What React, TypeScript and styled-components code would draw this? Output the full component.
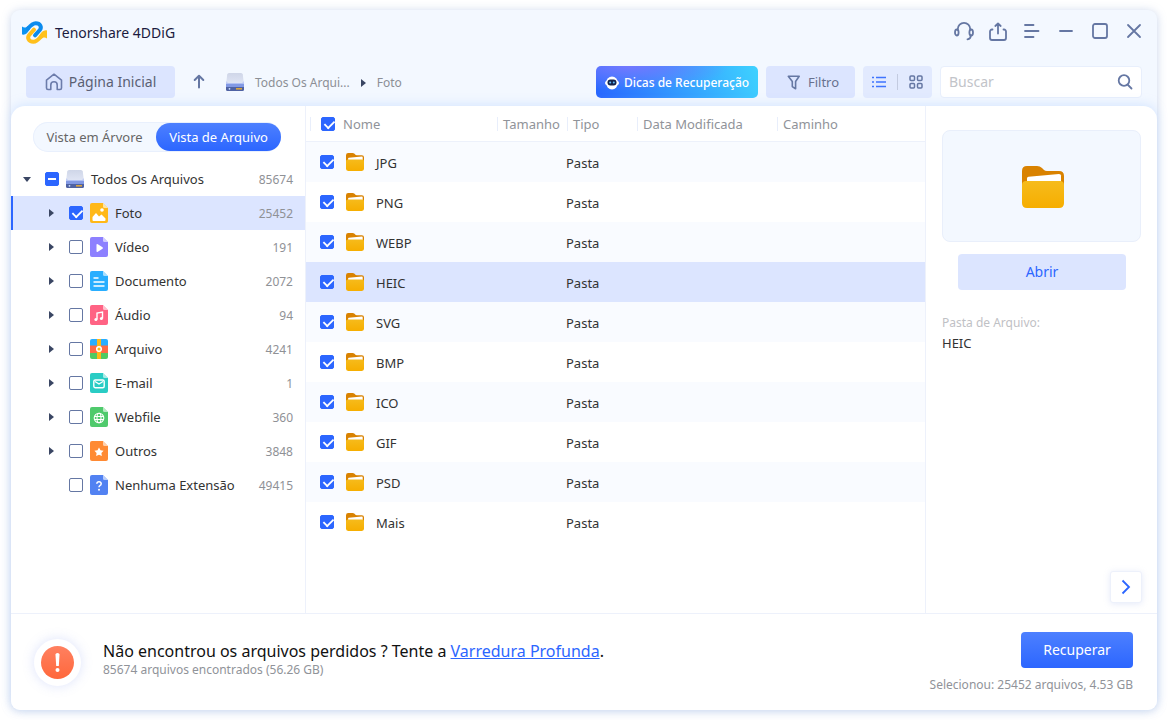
import React from "react";
import styled, { createGlobalStyle, css } from "styled-components";

const Global = createGlobalStyle`
  * { box-sizing: border-box; }
  body { margin: 0; background: #fff; font-family: "Noto Sans", "Open Sans", sans-serif; font-size: 13px; line-height: 20px; color: #333; }
  button, input { font: inherit; color: inherit; }
  button { border: 0; padding: 0; background: none; cursor: pointer; }
  svg { display: block; flex: none; }
`;

const Page = styled.div`
  min-height: 100vh;
  padding: 10px 11px;
  display: flex;
`;

const Frame = styled.div`
  flex: 1;
  min-width: 0;
  display: flex;
  flex-direction: column;
  background: #f3f8ff;
  border-radius: 9px;
  box-shadow: 0 1px 10px rgba(120, 150, 205, 0.4);
`;

const TitleBar = styled.header`
  display: flex;
  align-items: center;
  height: 42px;
  padding: 2px 11px 0 11px;
  gap: 8px;
`;

const AppName = styled.h1`
  margin: 2px 0 0;
  flex: 1;
  font-size: 14px;
  line-height: 20px;
  font-weight: 400;
  color: #1b1b40;
`;

const WindowActions = styled.div`
  display: flex;
  align-items: center;
  gap: 10px;
  margin-bottom: 3px;
`;

const WindowButton = styled.button`
  width: 24px;
  height: 24px;
  display: grid;
  place-items: center;
  color: #6577a3;
`;

const Toolbar = styled.div`
  display: flex;
  align-items: center;
  gap: 8px;
  height: 60px;
  margin-bottom: -6px;
  padding: 0 15px;
`;

const HomeButton = styled.button`
  width: 149px;
  height: 32px;
  display: flex;
  align-items: center;
  justify-content: center;
  gap: 6px;
  border-radius: 4px;
  background: #dce5ff;
  color: #5a5f73;
  font-size: 14px;
`;

const UpButton = styled.button`
  width: 32px;
  height: 32px;
  display: grid;
  place-items: center;
`;

const Breadcrumb = styled.nav`
  flex: 1;
  display: flex;
  align-items: center;
  gap: 11px;
  font-size: 12px;
  padding: 1px 0 0 3px;
  & > svg:first-child { margin-bottom: 2px; }
`;

const Crumb = styled.a`
  color: #8c8f96;
  text-decoration: none;
  white-space: nowrap;
`;

const TipsButton = styled.button`
  width: 162px;
  height: 32px;
  display: flex;
  align-items: center;
  justify-content: center;
  gap: 5px;
  padding-top: 1px;
  border-radius: 5px;
  background: radial-gradient(ellipse at 20% 0, #7378ff 0, transparent 55%), linear-gradient(70deg, #2966ff, #3ed2ff);
  color: #fff;
  font-size: 12px;
  font-weight: 500;
  white-space: nowrap;
`;

const FilterButton = styled.button`
  width: 89px;
  height: 32px;
  display: flex;
  align-items: center;
  justify-content: center;
  gap: 7px;
  padding-left: 5px;
  border-radius: 4px;
  background: #dce5ff;
  color: #67718f;
`;

const ViewSwitch = styled.div`
  width: 69px;
  height: 32px;
  display: flex;
  align-items: center;
  border-radius: 4px;
  background: #e2eafe;
`;

const ViewButton = styled.button`
  flex: 1;
  height: 16px;
  display: grid;
  place-items: center;
  padding-right: 2px;
  & + & { border-left: 1px solid #c3cbe0; padding: 0 0 0 2px; }
`;

const SearchBox = styled.label`
  width: 202px;
  height: 32px;
  display: flex;
  align-items: center;
  padding: 0 8px;
  border: 1px solid #e8effc;
  border-radius: 4px;
  background: #fff;
`;

const SearchInput = styled.input`
  flex: 1;
  min-width: 0;
  border: 0;
  padding: 0;
  outline: 0;
  background: none;
  font-size: 14px;
  &::placeholder { color: #c2c4c9; opacity: 1; }
`;

const Body = styled.div`
  flex: 1;
  display: flex;
  flex-direction: column;
  background: #fff;
  border-radius: 14px 14px 9px 9px;
  box-shadow: 0 -2px 10px rgba(190, 215, 255, 0.5);
`;

const Columns = styled.main`
  flex: 1;
  display: flex;
`;

const Sidebar = styled.aside`
  width: 295px;
  flex: none;
  border-right: 1px solid #edf1fb;
`;

const Tabs = styled.div`
  width: 248px;
  height: 30px;
  margin: 16px 0 10px 22px;
  display: flex;
  border-radius: 15px;
  background: #f3f8ff;
  box-shadow: inset 0 0 0 1px #e9f0fd;
`;

const Tab = styled.button<{ $on?: boolean }>`
  flex: ${(p) => (p.$on ? "125" : "123")} 0 0;
  height: 28px;
  margin: 1px 0;
  border-radius: 14px;
  white-space: nowrap;
  color: #666;
  ${(p) => p.$on && css`
    color: #fff;
    background: linear-gradient(#4d80ff, #2c66ff);
  `}
`;

const Tree = styled.ul`
  list-style: none;
  margin: 0;
  padding: 0;
`;

const TreeRow = styled.li<{ $on?: boolean; $root?: boolean }>`
  height: 34px;
  display: flex;
  align-items: center;
  padding: 0 12px 0 ${(p) => (p.$root ? 11 : 35)}px;
  ${(p) => p.$on && css`
    background: #dce5ff;
    box-shadow: inset 2px 0 0 #2c66ff;
  `}
`;

const Caret = styled.span<{ $open?: boolean; $hidden?: boolean }>`
  width: 10px;
  height: 10px;
  margin-right: 13px;
  flex: none;
  display: grid;
  place-items: center;
  visibility: ${(p) => (p.$hidden ? "hidden" : "visible")};
  &::before {
    content: "";
    border: solid transparent;
    ${(p) => p.$open
      ? css`border-width: 5px 4px 0; border-top-color: #3a4663;`
      : css`border-width: 4px 0 4px 5px; border-left-color: #3a4663;`}
  }
`;

const Check = styled.input.attrs({ type: "checkbox" })<{ $partial?: boolean }>`
  appearance: none;
  flex: none;
  display: block;
  width: 14px;
  height: 14px;
  margin: 0;
  border: 1px solid #6577a3;
  border-radius: 2px;
  background: #fff;
  &:checked {
    border-color: #2c66ff;
    background: #2c66ff;
  }
  &:checked::before {
    content: "";
    display: block;
    ${(p) => p.$partial
      ? css`width: 8px; height: 2px; margin: 5px 2px; background: #fff;`
      : css`width: 9px; height: 5px; margin: 2px; border: solid #fff; border-width: 0 0 2px 2px; transform: rotate(-45deg) scale(0.9);`}
  }
`;

const TreeLabel = styled.label`
  flex: 1;
  display: flex;
  align-items: center;
  gap: 7px;
  margin-left: 7px;
  white-space: nowrap;
`;

const Count = styled.span`
  padding-top: 2px;
  font-size: 12px;
  color: #8f9196;
`;

const ListArea = styled.section`
  flex: 1;
  min-width: 0;
`;

const Table = styled.table`
  width: 100%;
  table-layout: fixed;
  border-collapse: separate;
  border-spacing: 0;
`;

const HeadCell = styled.th<{ $w?: number }>`
  width: ${(p) => (p.$w ? p.$w + "px" : "auto")};
  height: 36px;
  padding: 0 0 0 1px;
  border-bottom: 1px solid #edf1fb;
  text-align: left;
  font-weight: 400;
  color: #909399;
  white-space: nowrap;
`;

const HeadInner = styled.div<{ $first?: boolean }>`
  height: 14px;
  display: flex;
  align-items: center;
  gap: 8px;
  border-left: 1px solid #e8eefb;
  margin-left: ${(p) => (p.$first ? 3 : 0)}px;
  padding-left: ${(p) => (p.$first ? 10 : 5)}px;
`;

const Row = styled.tr<{ $on?: boolean }>`
  background: #fff;
  &:nth-child(odd) { background: #f9fbff; }
  ${(p) => p.$on && css`&& { background: #dce5ff; }`}
`;

const Cell = styled.td`
  height: 40px;
  padding: 2px 0 0;
`;

const FileName = styled.label`
  display: flex;
  align-items: center;
  gap: 12px;
  padding-left: 14px;
  & > input, & > svg { margin-bottom: 2px; }
`;

const Detail = styled.aside`
  width: 232px;
  flex: none;
  display: flex;
  flex-direction: column;
  border-left: 1px solid #edf1fb;
  padding: 24px 15px 10px 16px;
`;

const Preview = styled.div`
  height: 112px;
  margin-right: 1px;
  display: grid;
  place-items: center;
  padding: 1px 0 0 2px;
  border: 1px solid #e9effb;
  border-radius: 8px;
  background: #f3f8ff;
`;

const OpenButton = styled.button`
  height: 36px;
  margin: 12px 16px 23px;
  border-radius: 4px;
  background: #dce5ff;
  color: #2c66ff;
  font-size: 14px;
`;

const FieldName = styled.span`
  font-size: 12px;
  color: #bfc1c5;
`;

const NextButton = styled.button`
  width: 32px;
  height: 32px;
  margin-top: auto;
  align-self: flex-end;
  display: grid;
  place-items: center;
  border: 1px solid #edf1fb;
  border-radius: 3px;
  background: #fff;
  box-shadow: 0 1px 6px rgba(150, 170, 230, 0.25);
`;

const Footer = styled.footer`
  min-height: 97px;
  display: flex;
  align-items: center;
  gap: 22px;
  padding: 0 24px 0 23px;
  border-top: 1px solid #edf1fb;
`;

const AlertBadge = styled.div`
  width: 47px;
  height: 47px;
  display: grid;
  place-items: center;
  border-radius: 50%;
  background: #fff;
  box-shadow: 0 0 12px rgba(120, 145, 240, 0.25);
`;

const Message = styled.div`
  flex: 1;
  padding-bottom: 7px;
`;

const Question = styled.p`
  margin: 0;
  font-size: 16px;
  line-height: 22px;
  color: #111;
  a { color: #2c66ff; }
`;

const Note = styled.p`
  margin: 0;
  font-size: 12px;
  line-height: 16px;
  color: #909399;
`;

const Finish = styled.div`
  display: flex;
  flex-direction: column;
  align-items: flex-end;
  gap: 9px;
  padding-top: 1px;
`;

const RecoverButton = styled.button`
  width: 112px;
  height: 36px;
  border-radius: 4px;
  background: linear-gradient(#4d80ff, #2c66ff);
  color: #fff;
  font-size: 14px;
`;

const line = { fill: "none", stroke: "currentColor", strokeWidth: 2, strokeLinecap: "round", strokeLinejoin: "round" } as const;

const Logo = () => (
  <svg width="25" height="23" viewBox="0 0 25 23" fill="none" strokeWidth="4" strokeLinecap="round">
    <path d="M0 5.500C2 7 4 7 5.500 5L8 8C5.500 12 3.500 14.300 0 13.500z" fill="#0b93f2" />
    <path d="M25 17.500C23 16 21 16 19.500 18L17 15C19.500 11 21.500 8.700 25 9.500z" fill="#ffc21c" />
    <path d="M6 7.500C9 3.800 11.300 2.200 13.700 2.200C18.500 2.200 20 6.300 17.800 9L13 14.300" stroke="#0b8bee" />
    <path d="M19 15.500C16 19.200 13.700 20.800 11.300 20.800C6.500 20.800 5 16.700 7.200 14L12 8.700" stroke="#ffc01c" />
  </svg>
);

const HeadsetIcon = () => (
  <svg width="20" height="20" viewBox="0 0 20 20" {...line} strokeWidth="1.800">
    <path d="M3.800 8.500V8a6.200 6.200 0 0 1 12.400 0v.5M16.800 14.500c0 2-1.300 3.500-3.300 3.800" />
    <ellipse cx="2.800" cy="11.500" rx="1.800" ry="3" /><ellipse cx="17.200" cy="11.500" rx="1.800" ry="3" />
  </svg>
);
const ShareIcon = () => (
  <svg width="20" height="20" viewBox="0 0 20 20" {...line} strokeWidth="1.800">
    <path d="M4.500 8.500H4a2 2 0 0 0-2 2V17a2 2 0 0 0 2 2h12a2 2 0 0 0 2-2v-6.500a2 2 0 0 0-2-2h-.5M10 12.500V3M7.300 5L10 2.500 12.700 5" />
  </svg>
);
const MenuIcon = () => (
  <svg width="20" height="20" viewBox="0 0 20 20" {...line} strokeWidth="1.800"><path d="M3 4h8.500M3 10h13.500M3 16h8.500" /></svg>
);
const MinimizeIcon = () => (
  <svg width="20" height="20" viewBox="0 0 20 20" {...line} strokeWidth="1.800"><path d="M4 10h12" /></svg>
);
const MaximizeIcon = () => (
  <svg width="20" height="20" viewBox="0 0 20 20" {...line} strokeWidth="1.800"><rect x="3" y="3" width="14" height="14" rx="2" /></svg>
);
const CloseIcon = () => (
  <svg width="20" height="20" viewBox="0 0 20 20" {...line} strokeWidth="1.800"><path d="M4 4l12 12M16 4L4 16" /></svg>
);
const HomeIcon = () => (
  <svg width="18" height="18" viewBox="0 0 18 18" {...line} stroke="#6c7cab" strokeWidth="1.600">
    <path d="M1.500 7.200L9 1.200l7.500 6V15a1.500 1.500 0 0 1-1.500 1.500h-2.800V12a3.200 3.200 0 0 0-6.400 0v4.500H3A1.500 1.500 0 0 1 1.500 15z" />
  </svg>
);
const UpIcon = () => (
  <svg width="14" height="16" viewBox="0 0 14 16" {...line} stroke="#6577a3"><path d="M7 13.500V2M2.700 6L7 1.700 11.300 6" /></svg>
);
const DriveIcon = () => (
  <svg width="18" height="18" viewBox="0 0 18 18">
    <defs>
      <linearGradient id="drive" x1="0" y1="0" x2="0" y2="1"><stop stopColor="#cfd6e8" /><stop offset="1" stopColor="#e2e7f6" /></linearGradient>
    </defs>
    <path d="M3 0h12q1.500 0 1.800 1.500L18 12H0L1.200 1.500Q1.500 0 3 0z" fill="url(#drive)" />
    <path d="M0 10.500q0 2 2 2h14q2 0 2-2l-.8-2.500-.7 2H1.500l-.7-2z" fill="#b3c2f3" />
    <rect y="11" width="18" height="3.500" fill="#8299e4" />
    <path d="M0 14h18v2.500q0 1.500-1.500 1.500h-15Q0 18 0 16.500z" fill="#4f62a3" />
    <circle cx="3.500" cy="15.800" r=".9" fill="#cfe2ff" /><rect x="10" y="15" width="6" height="1.600" fill="#d9a441" />
  </svg>
);
const RobotIcon = () => (
  <svg width="14" height="14" viewBox="0 0 14 14">
    <ellipse cx="7" cy="7" rx="6" ry="6.500" fill="#fff" /><rect y="5" width="14" height="4" rx="2" fill="#fff" />
    <rect x="2.500" y="3.500" width="9" height="6" rx="3" fill="#14244d" />
    <circle cx="5.200" cy="6.500" r="1" fill="#5fc0ff" /><circle cx="8.800" cy="6.500" r="1" fill="#5fc0ff" />
  </svg>
);
const FunnelIcon = () => (
  <svg width="14" height="15" viewBox="0 0 14 15" {...line} stroke="#6577a3" strokeWidth="1.600">
    <path d="M1.300 1.300h10.900L8.600 6.500v7.300L5.300 11.500v-5z" />
  </svg>
);
const ListIcon = () => (
  <svg width="14" height="12" viewBox="0 0 14 12" stroke="#3f74ff" strokeWidth="1.500">
    <path d="M0 1.500h2M4 1.500h10M0 6h2M4 6h10M0 10.500h2M4 10.500h10" />
  </svg>
);
const GridIcon = () => (
  <svg width="14" height="14" viewBox="0 0 14 14" {...line} stroke="#6577a3" strokeWidth="1.500">
    <rect x="1" y="1" width="4.500" height="4.500" rx="1" /><rect x="8.500" y="1" width="4.500" height="4.500" rx="1" />
    <rect x="1" y="8.500" width="4.500" height="4.500" rx="1" /><rect x="8.500" y="8.500" width="4.500" height="4.500" rx="1" />
  </svg>
);
const SearchIcon = () => (
  <svg width="16" height="16" viewBox="0 0 16 16" {...line} stroke="#6577a3" strokeWidth="1.800"><circle cx="7" cy="6.500" r="5.300" /><path d="M11 11l3.500 3.500" /></svg>
);
const FolderIcon = ({ size = 18 }: { size?: number }) => (
  <svg width={size} height={size} viewBox="0 0 42 42">
    <defs>
      <linearGradient id="folder" x1="0" y1="0" x2="0" y2="1"><stop stopColor="#f6bb1c" /><stop offset="1" stopColor="#f6ae00" /></linearGradient>
    </defs>
    <path d="M0 5q0-5 5-5h10q3 0 5 2l2 2q1 1 3 1h12q5 0 5 5v15H0z" fill="#d98200" />
    <path d="M5 12.500q0-1.500 1.500-1.700L37 8q2 0 2 1.500v8H5z" fill="#fff" />
    <path d="M0 19q0-4 4-4h34q4 0 4 4v18q0 5-5 5H5q-5 0-5-5z" fill="url(#folder)" />
  </svg>
);

const glyphs: Record<string, React.ReactNode> = {
  photo: <><path d="M2.500 17v-3l3.500-4 3 3.500 2.500-2 4 4V17q0 1-1 1h-11q-1 0-1-1z" fill="#fff" /><circle cx="12" cy="7" r="1.800" fill="#fff" /></>,
  video: <path d="M6.500 8q0-1.500 1.300-.8l4.700 3.100q.9.700 0 1.400l-4.700 3.100q-1.300.7-1.300-.8z" fill="#fff" />,
  doc: <path d="M3.500 7h5M3.500 11h11M3.500 15h11" stroke="#fff" strokeWidth="1.600" />,
  audio: <><path d="M7 14.500V8l5.500-1v6.500" fill="none" stroke="#fff" strokeWidth="1.400" /><circle cx="5.900" cy="14.400" r="1.500" fill="#fff" /><circle cx="11.400" cy="13.500" r="1.500" fill="#fff" /></>,
  mail: <><rect x="3.800" y="7" width="10.400" height="7.800" rx="1.500" fill="none" stroke="#fff" strokeWidth="1.400" /><path d="M5 8.500l4 2.500 4-2.500" fill="none" stroke="#fff" strokeWidth="1.400" /></>,
  web: <g fill="none" stroke="#fff" strokeWidth="1.100"><circle cx="9" cy="11" r="4.800" /><ellipse cx="9" cy="11" rx="2" ry="4.800" /><path d="M4.500 9.500h9M4.500 12.500h9" /></g>,
  other: <path d="M9 6.500l1.500 2.800 3.100.5-2.200 2.200.5 3.100L9 13.700l-2.900 1.400.5-3.100-2.200-2.200 3.100-.5z" fill="#fff" />,
  none: <><path d="M6.800 8.800q.2-2 2.200-2t2.200 1.900q0 1.200-1.300 1.900-.9.500-.9 1.700" fill="none" stroke="#fff" strokeWidth="1.500" /><circle cx="9" cy="14.700" r="1" fill="#fff" /></>,
};

const KindIcon = ({ kind, color }: { kind: string; color: string }) =>
  kind === "archive" ? (
    <svg width="18" height="20" viewBox="0 0 18 20">
      <path d="M0 2q0-2 2-2h14q2 0 2 2v5H0z" fill="#29aeff" /><path d="M0 6.500h18v7.500H0z" fill="#ff6b45" />
      <path d="M0 14h18v4q0 2-2 2H2q-2 0-2-2z" fill="#4fca62" /><path d="M7 0h4v20H7z" fill="#ffb818" />
      <circle cx="9" cy="10" r="2.300" fill="#ffb818" stroke="#fff" strokeWidth="1.500" />
    </svg>
  ) : (
    <svg width="18" height="20" viewBox="0 0 18 20">
      <path d="M2 0h11l5 5v13q0 2-2 2H2q-2 0-2-2V2q0-2 2-2z" fill={color} />
      <path d="M13 0l5 5h-3.500Q13 5 13 3.500z" fill="#fff" opacity=".6" />
      {glyphs[kind]}
    </svg>
  );

const kinds = [
  { kind: "photo", color: "#ffb818", label: "Foto", count: 25452, on: true },
  { kind: "video", color: "#8d80ff", label: "Vídeo", count: 191 },
  { kind: "doc", color: "#29aeff", label: "Documento", count: 2072 },
  { kind: "audio", color: "#ff6384", label: "Áudio", count: 94 },
  { kind: "archive", color: "", label: "Arquivo", count: 4241 },
  { kind: "mail", color: "#2accc4", label: "E-mail", count: 1 },
  { kind: "web", color: "#4fca6c", label: "Webfile", count: 360 },
  { kind: "other", color: "#ff8a33", label: "Outros", count: 3848 },
  { kind: "none", color: "#5282f2", label: "Nenhuma Extensão", count: 49415 },
];

const folders = ["JPG", "PNG", "WEBP", "HEIC", "SVG", "BMP", "ICO", "GIF", "PSD", "Mais"];

export default function App() {
  return (
    <Page>
      <Global />
      <Frame>
        <TitleBar>
          <Logo />
          <AppName>Tenorshare 4DDiG</AppName>
          <WindowActions>
            <WindowButton aria-label="Suporte"><HeadsetIcon /></WindowButton>
            <WindowButton aria-label="Compartilhar"><ShareIcon /></WindowButton>
            <WindowButton aria-label="Menu"><MenuIcon /></WindowButton>
            <WindowButton aria-label="Minimizar"><MinimizeIcon /></WindowButton>
            <WindowButton aria-label="Maximizar"><MaximizeIcon /></WindowButton>
            <WindowButton aria-label="Fechar"><CloseIcon /></WindowButton>
          </WindowActions>
        </TitleBar>
        <Toolbar>
          <HomeButton><HomeIcon />Página Inicial</HomeButton>
          <UpButton aria-label="Subir um nível"><UpIcon /></UpButton>
          <Breadcrumb>
            <DriveIcon />
            <Crumb href="#todos">Todos Os Arqui...</Crumb>
            <svg width="5" height="8" viewBox="0 0 5 8"><path d="M0 0l5 4-5 4z" fill="#3a4663" /></svg>
            <Crumb href="#foto">Foto</Crumb>
          </Breadcrumb>
          <TipsButton><RobotIcon />Dicas de Recuperação</TipsButton>
          <FilterButton><FunnelIcon />Filtro</FilterButton>
          <ViewSwitch>
            <ViewButton aria-label="Lista"><ListIcon /></ViewButton>
            <ViewButton aria-label="Grade"><GridIcon /></ViewButton>
          </ViewSwitch>
          <SearchBox>
            <SearchInput type="text" placeholder="Buscar" aria-label="Buscar" />
            <SearchIcon />
          </SearchBox>
        </Toolbar>
        <Body>
          <Columns>
            <Sidebar>
              <Tabs>
                <Tab>Vista em Árvore</Tab>
                <Tab $on>Vista de Arquivo</Tab>
              </Tabs>
              <Tree>
                <TreeRow $root>
                  <Caret $open />
                  <Check id="all" $partial defaultChecked />
                  <TreeLabel htmlFor="all"><DriveIcon />Todos Os Arquivos</TreeLabel>
                  <Count>85674</Count>
                </TreeRow>
                {kinds.map((k) => (
                  <TreeRow key={k.kind} $on={k.on}>
                    <Caret $hidden={k.kind === "none"} />
                    <Check id={k.kind} defaultChecked={k.on} />
                    <TreeLabel htmlFor={k.kind}><KindIcon kind={k.kind} color={k.color} />{k.label}</TreeLabel>
                    <Count>{k.count}</Count>
                  </TreeRow>
                ))}
              </Tree>
            </Sidebar>
            <ListArea>
              <Table>
                <thead>
                  <tr>
                    <HeadCell $w={190}><HeadInner $first><Check id="names" defaultChecked /><label htmlFor="names">Nome</label></HeadInner></HeadCell>
                    <HeadCell $w={70}><HeadInner>Tamanho</HeadInner></HeadCell>
                    <HeadCell $w={70}><HeadInner>Tipo</HeadInner></HeadCell>
                    <HeadCell $w={140}><HeadInner>Data Modificada</HeadInner></HeadCell>
                    <HeadCell><HeadInner>Caminho</HeadInner></HeadCell>
                  </tr>
                </thead>
                <tbody>
                  {folders.map((name) => (
                    <Row key={name} $on={name === "HEIC"}>
                      <Cell><FileName><Check defaultChecked /><FolderIcon />{name}</FileName></Cell>
                      <Cell />
                      <Cell>Pasta</Cell>
                      <Cell />
                      <Cell />
                    </Row>
                  ))}
                </tbody>
              </Table>
            </ListArea>
            <Detail>
              <Preview><FolderIcon size={42} /></Preview>
              <OpenButton>Abrir</OpenButton>
              <FieldName>Pasta de Arquivo:</FieldName>
              <span>HEIC</span>
              <NextButton aria-label="Ocultar painel">
                <svg width="10" height="16" viewBox="0 0 10 16" fill="none" stroke="#2c66ff" strokeWidth="1.800"><path d="M1.500 1.500L8 8l-6.500 6.500" /></svg>
              </NextButton>
            </Detail>
          </Columns>
          <Footer>
            <AlertBadge>
              <svg width="33" height="33" viewBox="0 0 33 33">
                <defs><linearGradient id="alert" x1="0" y1="0" x2="0" y2="1"><stop stopColor="#ff8060" /><stop offset="1" stopColor="#ff683c" /></linearGradient></defs>
                <circle cx="16.500" cy="16.500" r="16.500" fill="url(#alert)" />
                <path d="M14.500 8.500q0-1.500 2-1.500t2 1.500l-.7 11.500h-2.600z" fill="#fff" /><circle cx="16.500" cy="24" r="2" fill="#fff" />
              </svg>
            </AlertBadge>
            <Message>
              <Question>Não encontrou os arquivos perdidos ? Tente a <a href="#profunda">Varredura Profunda</a>.</Question>
              <Note>85674 arquivos encontrados (56.26 GB)</Note>
            </Message>
            <Finish>
              <RecoverButton>Recuperar</RecoverButton>
              <Note>Selecionou: 25452 arquivos, 4.53 GB</Note>
            </Finish>
          </Footer>
        </Body>
      </Frame>
    </Page>
  );
}
